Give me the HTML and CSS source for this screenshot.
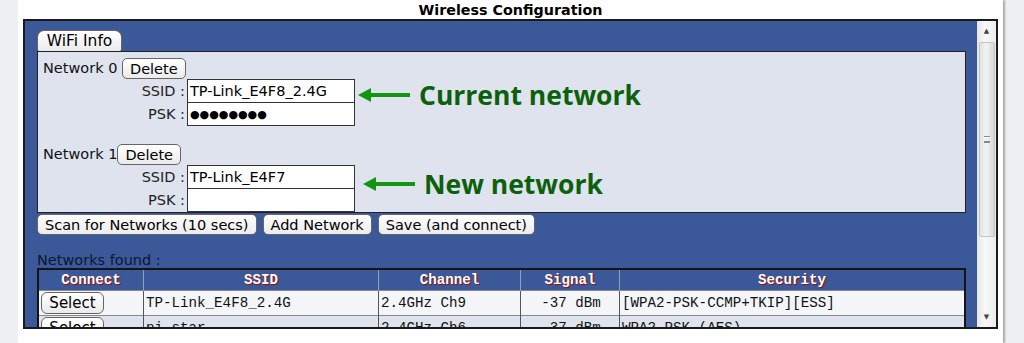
FILE: index.html
```html
<!DOCTYPE html>
<html lang="en">
<head>
  <meta charset="UTF-8">
  <title>Wireless Configuration</title>
  <link rel="stylesheet" href="styles.css">
</head>
<body>

  <div class="page">
    <h1>Wireless Configuration</h1>

    <div class="frame">
      <div class="frame-body">
        <button class="tab">WiFi Info</button>

        <div class="panel">
          <!-- Network 0 -->
          <div class="net-head">Network 0 <button class="btn">Delete</button></div>
          <div class="field">
            <label>SSID :</label>
            <input type="text" value="TP-Link_E4F8_2.4G">
            <span class="note note-current">
              <svg width="52" height="14" viewBox="0 0 52 14"><path d="M0 7 L13 0 L13 5 L52 5 L52 9 L13 9 L13 14 Z" fill="#129612"/></svg>
              Current network
            </span>
          </div>
          <div class="field field-next">
            <label>PSK :</label>
            <input type="text" class="dots" value="●●●●●●●●">
          </div>

          <!-- Network 1 -->
          <div class="net-head net-gap">Network 1<button class="btn">Delete</button></div>
          <div class="field">
            <label>SSID :</label>
            <input type="text" value="TP-Link_E4F7">
            <span class="note note-new">
              <svg width="52" height="14" viewBox="0 0 52 14"><path d="M0 7 L13 0 L13 5 L52 5 L52 9 L13 9 L13 14 Z" fill="#129612"/></svg>
              New network
            </span>
          </div>
          <div class="field field-next">
            <label>PSK :</label>
            <input type="text" value="">
          </div>
        </div>

        <div class="actions">
          <button class="btn">Scan for Networks (10 secs)</button>
          <button class="btn">Add Network</button>
          <button class="btn">Save (and connect)</button>
        </div>

        <div class="found">Networks found :</div>

        <table class="nets">
          <tr>
            <th class="c-connect">Connect</th>
            <th class="c-ssid">SSID</th>
            <th class="c-channel">Channel</th>
            <th class="c-signal">Signal</th>
            <th>Security</th>
          </tr>
          <tr class="odd">
            <td><button class="btn select">Select</button></td>
            <td>TP-Link_E4F8_2.4G</td>
            <td>2.4GHz Ch9</td>
            <td class="signal">-37 dBm</td>
            <td>[WPA2-PSK-CCMP+TKIP][ESS]</td>
          </tr>
          <tr class="even">
            <td><button class="btn select">Select</button></td>
            <td>pi-star</td>
            <td>2.4GHz Ch6</td>
            <td class="signal">-37 dBm</td>
            <td>WPA2-PSK (AES)</td>
          </tr>
        </table>
      </div>

      <div class="scrollbar">
        <div class="sb-arrow">&#9650;</div>
        <div class="sb-thumb"><span class="grip"></span></div>
        <div class="sb-track"></div>
        <div class="sb-arrow">&#9660;</div>
      </div>
    </div>
  </div>

</body>
</html>
```

FILE: styles.css
```css
body {
  margin: 0;
  background-color: #eef0f4;
  font-family: "DejaVu Sans", Verdana, sans-serif;
  font-size: 14.5px;
  color: #111;
}

.page {
  margin-left: 18px;
  width: 985px;
  height: 343px;
  background-color: #fff;
  box-shadow: 2px 0 2px #a8a8a8;
}

h1 {
  margin: 0;
  padding-top: 2px;
  font-size: 14.3px;
  line-height: 17px;
  text-align: center;
  color: #000;
}

.frame {
  display: flex;
  margin-left: 5px;
  width: 971px;
  height: 306px;
  border: 2px solid #1a1a1a;
  overflow: hidden;
}

.frame-body {
  flex: 1;
  background-color: #3b5998;
  padding: 9px 0 0 12px;
  overflow: hidden;
}

/* buttons */
.btn,
.tab {
  font-family: "DejaVu Sans", Verdana, sans-serif;
  font-size: 14.5px;
  color: #000;
  background: linear-gradient(#ffffff, #ebebeb);
  border: 1px solid #666;
  border-radius: 5px;
  padding: 0 7px;
  height: 21px;
  line-height: 18px;
  cursor: pointer;
}

.tab {
  display: block;
  width: 85px;
  height: 21px;
  padding: 0 6px;
  font-size: 15.5px;
  border-radius: 7px 7px 2px 2px;
  border-bottom: none;
}

.panel {
  width: 927px;
  background-color: #dfe3ee;
  border: 1px solid #222;
  padding: 6px 0 0 0;
}

.net-head {
  padding-left: 5px;
  height: 21px;
  line-height: 21px;
}

.net-gap {
  margin-top: 18px;
}

.net-head .btn {
  vertical-align: top;
}

.field {
  display: flex;
  align-items: center;
  height: 24px;
}

.field-next {
  margin-top: -1px;
}

.field label {
  width: 147px;
  text-align: right;
  color: #222;
}

.field input {
  box-sizing: border-box;
  margin-left: 2px;
  width: 168px;
  height: 24px;
  border: 1px solid #333;
  padding: 0 2px;
  font-family: "DejaVu Sans", Verdana, sans-serif;
  font-size: 14.5px;
  color: #000;
  background: #fff;
}

.field input.dots {
  font-size: 11px;
}

.note {
  display: flex;
  align-items: center;
  align-self: flex-start;
  gap: 9px;
  height: 24px;
  font-family: "Open Sans", sans-serif;
  font-weight: bold;
  font-size: 26.5px;
  color: #0b600b;
}

.note-current {
  margin: 4px 0 0 3px;
}

.note-new {
  margin: 7px 0 0 8px;
}

.actions {
  display: flex;
  gap: 6px;
  margin-top: 1px;
}

.found {
  margin-top: 17px;
  color: #0d1530;
  line-height: 16px;
}

.nets {
  width: 929px;
  border-collapse: collapse;
  border: 2px solid #141414;
  font-family: "Liberation Mono", "Courier New", monospace;
  font-size: 14.2px;
}

.nets th {
  height: 20px;
  padding: 0;
  color: #fff;
  font-weight: bold;
  text-shadow: 1px 1px 1px #b00000;
  border-left: 1px solid #8e9fc6;
  text-align: center;
}

.nets td {
  height: 24px;
  padding: 0 0 0 2px;
  border-left: 1px solid #555;
  border-top: 1px solid #888;
  white-space: nowrap;
}

.c-connect { width: 104px; }
.c-ssid { width: 234px; }
.c-channel { width: 141px; }
.c-signal { width: 98px; }

.nets .signal {
  text-align: center;
}

.odd td { background-color: #f4f5f9; }
.even td { background-color: #dfe3ee; }

.btn.select {
  font-size: 15px;
  width: 63px;
  height: 22px;
  padding: 0;
  border-radius: 6px;
}

/* scrollbar */
.scrollbar {
  display: flex;
  flex-direction: column;
  width: 19px;
  background: linear-gradient(90deg, #e6e6e6, #f8f8f8 40%, #ececec);
}

.sb-arrow {
  height: 20px;
  font-size: 7px;
  line-height: 20px;
  text-align: center;
  color: #444;
}

.sb-thumb {
  display: flex;
  align-items: center;
  justify-content: center;
  margin: 1px 1px 0 2px;
  height: 193px;
  border: 1px solid #c4c4c4;
  border-radius: 2px;
  background: linear-gradient(90deg, #e2e2e2, #f4f4f4 45%, #d6d6d6);
}

.grip {
  width: 6px;
  height: 5px;
  border-top: 1px solid #888;
  border-bottom: 1px solid #888;
  box-shadow: inset 0 2px 0 -1px #fff, inset 0 -2px 0 -1px #888;
}

.sb-track {
  flex: 1;
}
```
